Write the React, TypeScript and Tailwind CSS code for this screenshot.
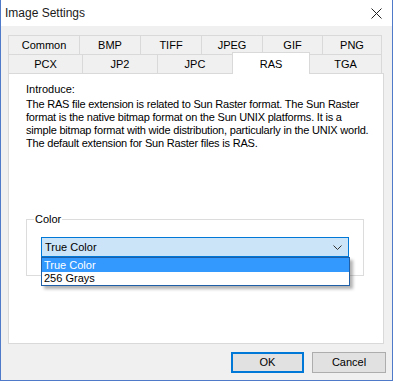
import React from 'react';

const row1 = [
  { name: 'Common', w: 72 },
  { name: 'BMP', w: 62 },
  { name: 'TIFF', w: 62 },
  { name: 'JPEG', w: 62 },
  { name: 'GIF', w: 61 },
  { name: 'PNG', w: 60 },
];

const row2 = [
  { name: 'PCX', w: 75 },
  { name: 'JP2', w: 76 },
  { name: 'JPC', w: 76 },
  { name: 'RAS', w: 78, active: true },
  { name: 'TGA', w: 73 },
];

const intro = [
  'The RAS file extension is related to Sun Raster format. The Sun Raster',
  'format is the native bitmap format on the Sun UNIX platforms. It is a',
  'simple bitmap format with wide distribution, particularly in the UNIX world.',
  'The default extension for Sun Raster files is RAS.',
];

const Tab: React.FC<{ name: string; w: number; active?: boolean; first?: boolean }> = ({ name, w, active, first }) => {
  if (active) {
    return (
      <div
        style={{ width: w }}
        className="relative z-10 -ml-px -mt-[2px] -mb-px flex h-[22px] items-start justify-center border border-b-0 border-[#d9d9d9] bg-white pt-[3px]"
      >
        {name}
      </div>
    );
  }
  return (
    <div
      style={{ width: w }}
      className={`flex h-[19px] items-center justify-center border border-b-0 border-[#d9d9d9] bg-[#f0f0f0] ${first ? '' : '-ml-px'}`}
    >
      {name}
    </div>
  );
};

export default function App() {
  return (
    <div
      className="flex h-[381px] w-[393px] flex-col overflow-hidden border-x border-b border-[#4f79c9] bg-[#f0f0f0] text-[11px] text-black"
      style={{ fontFamily: '"Liberation Sans", Arial, sans-serif' }}
    >
      {/* title bar */}
      <div className="flex h-[26px] shrink-0 items-center justify-between bg-white pl-[4px] pr-[10px]">
        <span className="text-[12px] text-[#1a1a1a]">Image Settings</span>
        <svg width="11" height="11" viewBox="0 0 11 11" className="text-[#222]">
          <path d="M0.5 0.5 L10.5 10.5 M10.5 0.5 L0.5 10.5" stroke="currentColor" strokeWidth="1" />
        </svg>
      </div>

      <div className="flex flex-1 flex-col pl-[7px] pr-[8px] pt-[9px]">
        {/* tabs */}
        <div className="flex flex-col">
          <div className="flex">
            {row1.map((t, i) => (
              <Tab key={t.name} name={t.name} w={t.w} first={i === 0} />
            ))}
          </div>
          <div className="flex">
            {row2.map((t, i) => (
              <Tab key={t.name} name={t.name} w={t.w} active={t.active} first={i === 0} />
            ))}
          </div>
        </div>

        {/* panel */}
        <div className="relative flex h-[271px] flex-col border border-[#d9d9d9] bg-white pl-[17px] pr-[19px] pt-[9px]">
          <div className="leading-[13px]">Introduce:</div>
          <div className="mt-[2px] whitespace-nowrap leading-[13px] tracking-[-0.2px]">
            {intro.map((l) => (
              <div key={l}>{l}</div>
            ))}
          </div>

          {/* group box */}
          <div className="relative mt-[69px] h-[57px] border border-[#dcdcdc] px-[14px] pt-[17px]">
            <span className="absolute -top-[7px] left-[7px] bg-white px-px leading-[13px]">Color</span>
            <div className="relative">
              <div className="flex h-[20px] items-center justify-between border border-[#0078d7] bg-[#cce4f7] pl-[3px] pr-[6px]">
                <span>True Color</span>
                <svg width="9" height="5" viewBox="0 0 9 5" className="text-[#333]">
                  <path d="M0.5 0.5 L4.5 4.5 L8.5 0.5" stroke="currentColor" strokeWidth="1" fill="none" />
                </svg>
              </div>
              <div className="absolute left-0 top-[20px] z-20 w-[309px] border border-[#1f5fa8] bg-white shadow-[3px_3px_3px_rgba(0,0,0,0.3)]">
                <div className="h-[14px] bg-[#3399ff] pl-[2px] leading-[14px] text-white">True Color</div>
                <div className="h-[13px] pl-[2px] leading-[13px]">256 Grays</div>
              </div>
            </div>
          </div>
        </div>

        {/* buttons */}
        <div className="-mr-[2px] mt-[8px] flex justify-end gap-[8px]">
          <button className="h-[21px] w-[73px] border-2 border-[#0078d7] bg-[#e1e1e1] text-[11px]">OK</button>
          <button className="h-[21px] w-[74px] border border-[#adadad] bg-[#e1e1e1] text-[11px]">Cancel</button>
        </div>
      </div>
    </div>
  );
}
